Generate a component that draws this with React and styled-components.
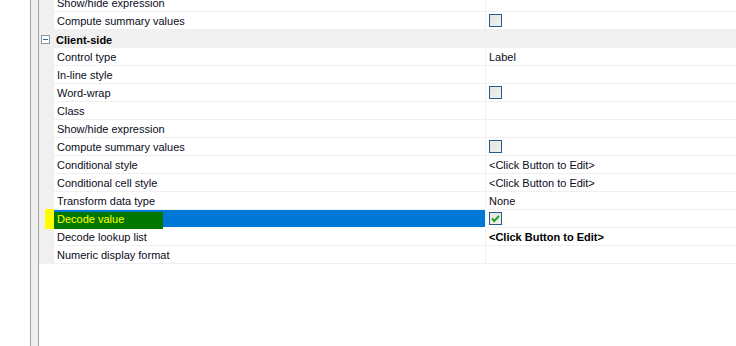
import styled, { createGlobalStyle } from 'styled-components';

const GlobalStyle = createGlobalStyle`
    html, body {
        margin: 0;
        padding: 0;
        background: #FFFFFF;
    }
    body {
        font-family: 'Liberation Sans', Arial, sans-serif;
        font-size: 11px;
    }
`

const rows = [
    { name: 'Show/hide expression' },
    { name: 'Compute summary values', check: 'off' },
    { category: 'Client-side' },
    { name: 'Control type', value: 'Label' },
    { name: 'In-line style' },
    { name: 'Word-wrap', check: 'off' },
    { name: 'Class' },
    { name: 'Show/hide expression' },
    { name: 'Compute summary values', check: 'off' },
    { name: 'Conditional style', value: '<Click Button to Edit>' },
    { name: 'Conditional cell style', value: '<Click Button to Edit>' },
    { name: 'Transform data type', value: 'None' },
    { name: 'Decode value', check: 'on', selected: true },
    { name: 'Decode lookup list', value: '<Click Button to Edit>', bold: true },
    { name: 'Numeric display format' },
]

function CheckBox ({ checked }) {
    return (
        <Box>
            {checked && (
                <svg width="11" height="11" viewBox="0 0 11 11">
                    <path d="M2 5.5 L4.3 8 L9 2.8" fill="none" stroke="#22A022" strokeWidth="2" />
                </svg>
            )}
        </Box>
    )
}

export default function App () {
    return (
        <>
            <GlobalStyle />
            <Screen>
                <Blank />
                <Splitter />
                <Grid>
                    {rows.map((row, i) => row.category ? (
                        <CategoryRow key={i}>
                            <Toggle />
                            <CategoryTitle>{row.category}</CategoryTitle>
                        </CategoryRow>
                    ) : (
                        <Row key={i}>
                            <Gutter />
                            <NameCell selected={row.selected}>
                                {row.selected ? <Marked>{row.name}</Marked> : row.name}
                                {row.selected && <MarkerTail />}
                            </NameCell>
                            <ValueCell bold={row.bold}>
                                {row.check ? <CheckBox checked={row.check === 'on'} /> : row.value}
                            </ValueCell>
                        </Row>
                    ))}
                </Grid>
            </Screen>
        </>
    )
}

const Screen = styled.div`
    width: 736px;
    height: 346px;
    display: flex;
    overflow: hidden;
    background: #FFFFFF;
`
const Blank = styled.div`
    width: 30px;
    flex-shrink: 0;
`
const Splitter = styled.div`
    width: 7px;
    flex-shrink: 0;
    background: #F0F0F0;
    border-left: 1px solid #A0A0A0;
    border-right: 1px solid #A0A0A0;
`
const Grid = styled.div`
    flex: 1;
    display: flex;
    flex-direction: column;
    margin-top: -6px;
`
const Row = styled.div`
    display: flex;
    height: 18px;
    color: #0B0B22;
`
const Gutter = styled.div`
    width: 15px;
    flex-shrink: 0;
    background: #F0F0F0;
`
const NameCell = styled.div`
    position: relative;
    width: 428px;
    flex-shrink: 0;
    padding-left: 3px;
    line-height: 19px;
    height: 17px;
    white-space: nowrap;
    border-bottom: 1px solid #F0F0F0;
    border-right: 1px solid #F0F0F0;
    background: ${props => props.selected ? '#0078D7' : '#FFFFFF'};
    border-bottom-color: ${props => props.selected ? '#FFFFFF' : '#F0F0F0'};
`
const Marked = styled.span`
    position: relative;
    z-index: 1;
    color: #FFFF00;
    &::before {
        content: '';
        position: absolute;
        z-index: -1;
        left: -3px;
        top: -1px;
        width: 109px;
        height: 17px;
        background: #007800;
    }
`
const MarkerTail = styled.span`
    position: absolute;
    left: -9px;
    top: -1px;
    width: 9px;
    height: 20px;
    background: #FFFF00;
`
const ValueCell = styled.div`
    flex: 1;
    display: flex;
    align-items: center;
    padding-left: 3px;
    padding-top: 1px;
    height: 16px;
    white-space: nowrap;
    border-bottom: 1px solid #F0F0F0;
    font-weight: ${props => props.bold ? 700 : 400};
    color: ${props => props.bold ? '#000000' : '#0B0B22'};
`
const CategoryRow = styled.div`
    display: flex;
    align-items: center;
    height: 18px;
    background: #F0F0F0;
`
const Toggle = styled.div`
    width: 7px;
    height: 7px;
    margin-left: 2px;
    margin-right: 6px;
    border: 1px solid #8A98AE;
    background: #FFFFFF;
    position: relative;
    &::after {
        content: '';
        position: absolute;
        left: 1px;
        top: 3px;
        width: 5px;
        height: 1px;
        background: #4060A0;
    }
`
const CategoryTitle = styled.div`
    font-weight: 700;
    color: #000000;
    padding-top: 1px;
`
const Box = styled.div`
    width: 11px;
    height: 11px;
    margin-top: -1px;
    border: 1px solid #2A5A8C;
    background: linear-gradient(135deg, #E4E4E0, #F0F0EC);
    display: flex;
    align-items: center;
    justify-content: center;
`
